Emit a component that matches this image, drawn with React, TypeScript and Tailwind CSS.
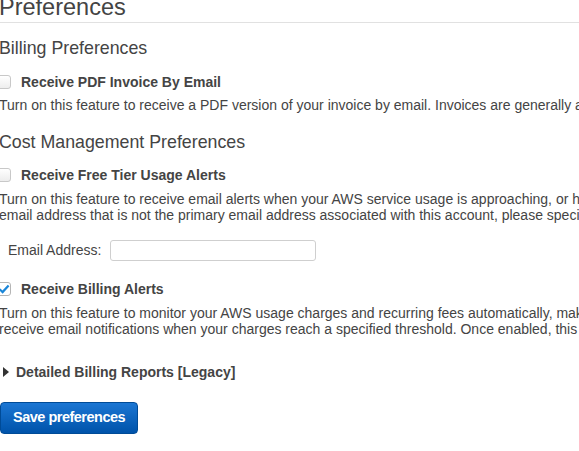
import { useState } from "react";

const Check = ({ checked }: { checked: boolean }) => (
    <span
        className={
            "inline-flex items-center justify-center min-w-[14px] w-[14px] h-[14px] rounded-[3px] border shrink-0 -ml-[2px] " +
            (checked ? "border-[#b5b5b5] bg-white" : "border-[#c8c8c8] bg-gradient-to-b from-white to-[#ededed]")
        }
    >
        {checked && (
            <svg viewBox="0 0 12 12" width="12" height="12">
                <path d="M1.6 6.2 L4.6 9.1 L10.6 2.6" fill="none" stroke="#1a86d8" strokeWidth="2.2" />
            </svg>
        )}
    </span>
);

const Option = ({ label, checked, onToggle }: { label: string; checked: boolean; onToggle: () => void }) => (
    <div className="flex items-center h-[18px] cursor-pointer" onClick={onToggle}>
        <Check checked={checked} />
        <span className="ml-[10px] font-bold text-[14px] text-[#444]">{label}</span>
    </div>
);

export default function App() {
    const [pdf, setPdf] = useState(false);
    const [freeTier, setFreeTier] = useState(false);
    const [billing, setBilling] = useState(true);

    return (
        <div className="w-[579px] h-[451px] overflow-hidden bg-white">
            <div className="w-[1100px] -ml-[1px] text-[#444] font-['Liberation_Sans',Arial,sans-serif]">
                <h1 className="text-[23.5px] leading-[26px] -mt-[6px] pb-[2px] border-b border-[#e1e1e1] mr-[500px]">
                    Preferences
                </h1>

                <h2 className="text-[17.8px] leading-[22px] mt-[14px]">Billing Preferences</h2>
                <div className="mt-[14px]">
                    <Option label="Receive PDF Invoice By Email" checked={pdf} onToggle={() => setPdf(!pdf)} />
                </div>
                <p className="text-[14px] leading-[16px] mt-[6px] whitespace-nowrap">
                    Turn on this feature to receive a PDF version of your invoice by email. Invoices are generally available within the first three days of the month.
                </p>

                <h2 className="text-[17.8px] leading-[22px] mt-[18px]">Cost Management Preferences</h2>
                <div className="mt-[13px]">
                    <Option label="Receive Free Tier Usage Alerts" checked={freeTier} onToggle={() => setFreeTier(!freeTier)} />
                </div>
                <p className="text-[14px] leading-[16px] mt-[7px] whitespace-nowrap">
                    Turn on this feature to receive email alerts when your AWS service usage is approaching, or has exceeded, the AWS Free Tier usage limits. If you wish to receive these alerts at an
                    <br />
                    email address that is not the primary email address associated with this account, please specify the email address below.
                </p>
                <div className="flex items-center mt-[16px] ml-[9px] h-[22px]">
                    <span className="text-[14px]">Email Address:</span>
                    <input
                        type="text"
                        className="ml-[9px] w-[206px] h-[21px] rounded-[3px] border border-[#cfcfcf] bg-white outline-none px-1 text-[14px]"
                    />
                </div>

                <div className="mt-[19px]">
                    <Option label="Receive Billing Alerts" checked={billing} onToggle={() => setBilling(!billing)} />
                </div>
                <p className="text-[14px] leading-[16px] mt-[7px] whitespace-nowrap">
                    Turn on this feature to monitor your AWS usage charges and recurring fees automatically, making it easier to track and manage your spending on AWS. You can set up billing alerts to
                    <br />
                    receive email notifications when your charges reach a specified threshold. Once enabled, this preference cannot be disabled.
                </p>

                <div className="flex items-center mt-[26px] h-[18px]">
                    <svg viewBox="0 0 6 10" className="w-[6px] h-[10px] ml-[4px]">
                        <path d="M0 0 L6 5 L0 10 Z" fill="#333" />
                    </svg>
                    <span className="ml-[7px] font-bold text-[14px]">Detailed Billing Reports [Legacy]</span>
                </div>

                <button className="mt-[21px] ml-[1px] h-[32px] px-[12px] rounded-[4px] border border-[#004b97] bg-gradient-to-b from-[#1b76d3] to-[#0053aa] text-white font-bold text-[14.5px] tracking-[-0.5px]">
                    Save preferences
                </button>
            </div>
        </div>
    );
}
